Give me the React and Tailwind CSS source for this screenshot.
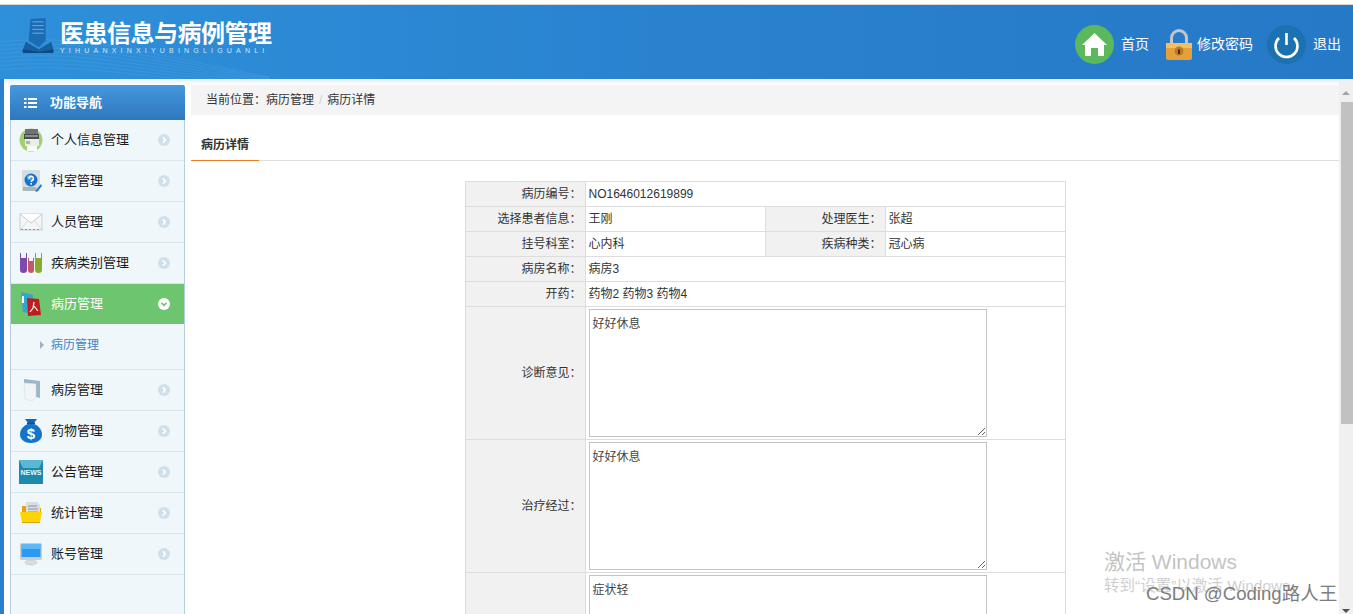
import React from "react";

const Arrow = ({ open }) => (
  <svg width="12" height="12" viewBox="0 0 12 12" className="shrink-0">
    <circle cx="6" cy="6" r="6" fill={open ? "#ffffff" : "#cfe0ea"} />
    {open ? (
      <path d="M3.4 4.8 L6 7.4 L8.6 4.8" fill="none" stroke="#6dc56f" strokeWidth="1.6" />
    ) : (
      <path d="M4.8 3.4 L7.4 6 L4.8 8.6" fill="none" stroke="#ffffff" strokeWidth="1.6" />
    )}
  </svg>
);

const Printer = () => (
  <svg width="24" height="24" viewBox="0 0 24 24">
    <circle cx="12" cy="12" r="11.5" fill="#a4cf72" />
    <rect x="6" y="1" width="13" height="5" fill="#6e7276" />
    <rect x="5" y="6" width="15" height="5" fill="#4a4d50" />
    <rect x="6" y="7" width="13" height="2" fill="#8b8f92" />
    <rect x="6" y="11" width="14" height="7" fill="#e9efe6" />
    <rect x="7" y="13" width="4" height="3" fill="#a9b6ab" />
    <rect x="8" y="18" width="10" height="5" fill="#f8faf6" />
  </svg>
);
const Help = () => (
  <svg width="24" height="24" viewBox="0 0 24 24">
    <rect x="3" y="1" width="18" height="21" rx="1" fill="#d5dde0" />
    <rect x="4" y="18" width="13" height="4" fill="#a9b7bc" />
    <circle cx="12" cy="11" r="6.5" fill="#1a72c6" />
    <circle cx="10.5" cy="8.5" r="2.5" fill="#5fb0ee" />
    <path d="M10 9.5 a2.2 2.2 0 1 1 3.2 2 q-1 .5 -1 1.6" fill="none" stroke="#fff" strokeWidth="1.5" />
    <rect x="11.4" y="14" width="1.6" height="1.6" fill="#fff" />
    <path d="M16 22 L22 15 L23 17 L18 23 Z" fill="#2a7fc4" />
  </svg>
);
const Mail = () => (
  <svg width="24" height="24" viewBox="0 0 24 24">
    <rect x="1" y="4" width="22" height="16" fill="#f6f6f6" stroke="#c8cdd0" />
    <path d="M1 4 L12 13 L23 4" fill="#ffffff" stroke="#c6cacc" />
    <path d="M1 20 L9 10 M23 20 L15 10" stroke="#d9dcde" />
    <path d="M2 19.5 H22" stroke="#d77" strokeDasharray="2 2" />
  </svg>
);
const Tubes = () => (
  <svg width="24" height="24" viewBox="0 0 24 24">
    <path d="M1 2 H2 V7 H7 V2 H8 V19 a3.5 3 0 0 1 -7 0 Z" fill="#7d49ad" />
    <path d="M9 7 H10 V10 H14 V7 H15 V19 a3 3 0 0 1 -6 0 Z" fill="#c25a64" />
    <path d="M16 2 H17 V7 H22 V2 H23 V19 a3.5 3 0 0 1 -7 0 Z" fill="#8aa92f" />
  </svg>
);
const Pdf = () => (
  <svg width="24" height="24" viewBox="0 0 24 24">
    <path d="M2 0 L14 3 V22 L4 20 Z" fill="#35a3cf" />
    <rect x="3" y="4" width="2" height="7" fill="#ffffff" />
    <path d="M8 6 L20 7 L22 23 L9 24 Z" fill="#bf1d1d" />
    <path d="M15 10 L14 16 L11 20 M15 14 L19 19" fill="none" stroke="#ffffff" strokeWidth="1.2" />
  </svg>
);
const Folder = () => (
  <svg width="24" height="24" viewBox="0 0 24 24">
    <path d="M5 1 L21 3 V20 L17 19 V6 L5 5 Z" fill="#9db6c9" />
    <path d="M5 5 L17 6 V19 L13 23 L6 21 Z" fill="#f1f5f7" stroke="#ccd7de" strokeWidth=".5" />
  </svg>
);
const Bag = () => (
  <svg width="24" height="24" viewBox="0 0 24 24">
    <path d="M6 0 H18 L15 4 H9 Z" fill="#1367b8" />
    <rect x="8" y="3.6" width="8" height="1.6" fill="#0c4f94" />
    <path d="M9 5 H15 C20 7 23 11 23 15.5 C23 21 18 24 12 24 C6 24 1 21 1 15.5 C1 11 4 7 9 5 Z" fill="#1574c9" />
    <text x="12" y="20" textAnchor="middle" fontSize="15" fontWeight="700" fill="#fff" fontFamily="Liberation Sans">$</text>
  </svg>
);
const News = () => (
  <svg width="24" height="24" viewBox="0 0 24 24">
    <rect width="24" height="24" fill="#1d89af" />
    <path d="M0 0 H24 L20 8 H4 Z" fill="#59b8d3" />
    <text x="12" y="15" textAnchor="middle" fontSize="7" fontWeight="700" fill="#e6f7fb" fontFamily="Liberation Sans">NEWS</text>
  </svg>
);
const OpenFolder = () => (
  <svg width="24" height="24" viewBox="0 0 24 24">
    <path d="M3 5 H9 L10 7 H22 V14 H3 Z" fill="#e3a507" />
    <path d="M7 1 H18 L21 4 V14 H7 Z" fill="#d8dde0" />
    <path d="M9 5 H18 M9 8 H19 M9 11 H19" stroke="#8d9499" />
    <path d="M1 11 H23 L21 21 H3 Z" fill="#fdd400" />
    <path d="M3 21 H21 V22 H3 Z" fill="#d9a400" />
  </svg>
);
const Monitor = () => (
  <svg width="24" height="24" viewBox="0 0 24 24">
    <rect x="1" y="1" width="22" height="17" rx="1.5" fill="#c9cdd0" />
    <rect x="2.5" y="2" width="19" height="13" fill="#2a9af0" />
    <rect x="2.5" y="2" width="19" height="5" fill="#5cb8f7" />
    <ellipse cx="12" cy="20.5" rx="6" ry="2.5" fill="#d9dcde" stroke="#bcc0c3" strokeWidth=".5" />
  </svg>
);

const Nav = ({ icon, label, active }) => (
  <div
    className={`flex items-center pl-[8px] pr-[14px] ${
      active ? "h-[40px] bg-[#6dc56f] text-white" : "h-[41px] border-b border-[#d8e5ec] text-[#1a1a1a]"
    }`}
  >
    <span className="flex w-[24px] justify-center">{icon}</span>
    <span className="ml-[8px] flex-1 text-[13px]">{label}</span>
    <Arrow open={active} />
  </div>
);

const Label = ({ children }) => (
  <td className="border border-[#dddddd] bg-[#f1f1f1] pr-[4px] text-right align-middle">{children}</td>
);
const Value = ({ children, span }) => (
  <td colSpan={span} className="border border-[#dddddd] px-[2px] align-middle">{children}</td>
);
const Area = ({ value }) => (
  <textarea
    readOnly
    value={value}
    className="my-[2px] ml-px block h-[128px] w-[398px] resize border border-[#c4c4c4] bg-white px-[2px] py-[5px] text-[12px] text-[#444] outline-none"
  />
);

export default function App() {
  return (
    <div
      className="relative flex h-[614px] w-[1353px] flex-col overflow-hidden bg-white text-[12px] text-[#333]"
      style={{ fontFamily: '"Liberation Sans", "Noto Sans CJK SC", sans-serif' }}
    >
      <div className="h-[4px] bg-white" />
      <div className="h-px bg-[#d8d8d8]" />
      <header className="relative flex h-[74px] items-start justify-between overflow-hidden bg-gradient-to-r from-[#2e90da] via-[#2a82cf] to-[#2679c6]">
        <svg width="420" height="74" viewBox="0 0 420 74" className="absolute top-0 left-0 opacity-20">
          {[0, 4, 8, 12, 16, 20, 24, 28].map((o) => (
            <path key={o} d={`M-10 ${38 + o} C 80 ${26 + o}, 150 ${50 + o}, 270 ${72 + o * 0.2}`} fill="none" stroke="#9fd0f2" strokeWidth=".6" />
          ))}
        </svg>
        <div className="relative flex items-start pl-[22px]">
          <svg width="34" height="36" viewBox="0 0 36 38" className="mt-[13px]">
            <path d="M9 1 L25 0 L25 24 L18 31 L7 24 Z" fill="#1d6cb3" />
            <path d="M11 4 H23 M11 8 H23 M11 12 H23 M11 16 H23" stroke="#6cb1e2" />
            <path d="M0 36 L4 25 L18 33 L31 25 L34 36 Z" fill="#16609f" />
            <path d="M1 33 L18 36 L33 33 V37 H1 Z" fill="#0e4a82" />
          </svg>
          <div className="ml-[4px] mt-[15px]">
            <div className="text-[24px] leading-[24px] font-bold tracking-[-0.5px] text-white" style={{ fontFamily: '"Noto Sans CJK SC", serif' }}>
              医患信息与病例管理
            </div>
            <div className="mt-[2px] text-[7px] leading-[9px] tracking-[4.2px] text-[#cfe6f7]">YIHUANXINXIYUBINGLIGUANLI</div>
          </div>
        </div>
        <nav className="relative mt-[20px] flex items-center pr-[12px] text-[14px] text-white">
          <svg width="39" height="39" viewBox="0 0 39 39">
            <circle cx="19.5" cy="19.5" r="19.5" fill="#5cb85c" />
            <path d="M7 20 L19.5 8 L32 20 L29 20 V31 H23 V23 H16 V31 H10 V20 Z" fill="#ffffff" />
          </svg>
          <span className="ml-[7px]">首页</span>
          <svg width="28" height="32" viewBox="0 0 28 32" className="ml-[16px]">
            <path d="M6.5 16 V9 a7.5 7.5 0 0 1 15 0 V16" fill="none" stroke="#c3c6c8" strokeWidth="3" />
            <rect x="1" y="14" width="26" height="17" rx="2" fill="#e3a03c" />
            <rect x="1" y="14" width="26" height="5" fill="#f2c063" />
            <circle cx="14" cy="22" r="4.5" fill="#bd7a1f" />
            <rect x="13" y="20.5" width="2" height="4.5" fill="#3a2406" />
          </svg>
          <span className="ml-[4px]">修改密码</span>
          <svg width="39" height="39" viewBox="0 0 39 39" className="ml-[14px]">
            <circle cx="19.5" cy="19.5" r="19.5" fill="#1b72b0" />
            <path d="M12 13 a11 11 0 1 0 15 0" fill="none" stroke="#ffffff" strokeWidth="2.6" />
            <path d="M19.5 8 V20" stroke="#ffffff" strokeWidth="2.6" />
          </svg>
          <span className="ml-[7px]">退出</span>
        </nav>
      </header>

      <div className="flex min-h-0 flex-1 border-l-4 border-[#2a80cd]">
        <div className="flex min-w-0 flex-1 bg-gradient-to-b from-[#e4f0f8] to-white to-[6px] pt-[6px] pl-[6px]">
          <aside className="flex w-[175px] shrink-0 flex-col">
            <div className="flex h-[35px] items-center rounded-t-[2px] bg-gradient-to-b from-[#4698de] to-[#2e77bd] pl-[14px] text-[13px] font-bold text-white">
              <svg width="13" height="12" viewBox="0 0 13 12" fill="#ffffff">
                <rect x="0" y="1" width="2.5" height="2" /><rect x="4" y="1" width="9" height="2" />
                <rect x="0" y="5" width="2.5" height="2" /><rect x="4" y="5" width="9" height="2" />
                <rect x="0" y="9" width="2.5" height="2" /><rect x="4" y="9" width="9" height="2" />
              </svg>
              <span className="ml-[13px]">功能导航</span>
            </div>
            <div className="flex-1 border-x border-[#b6cfe0] bg-[#eff7fb]">
              <Nav icon={<Printer />} label="个人信息管理" />
              <Nav icon={<Help />} label="科室管理" />
              <Nav icon={<Mail />} label="人员管理" />
              <Nav icon={<Tubes />} label="疾病类别管理" />
              <Nav icon={<Pdf />} label="病历管理" active />
              <div className="flex h-[46px] items-center border-b border-[#d8e5ec] pl-[29px] pb-[3px] text-[#3f83c4]">
                <span className="h-0 w-0 border-y-[4px] border-l-[4px] border-y-transparent border-l-[#9db3c4]" />
                <span className="ml-[7px]">病历管理</span>
              </div>
              <Nav icon={<Folder />} label="病房管理" />
              <Nav icon={<Bag />} label="药物管理" />
              <Nav icon={<News />} label="公告管理" />
              <Nav icon={<OpenFolder />} label="统计管理" />
              <Nav icon={<Monitor />} label="账号管理" />
            </div>
          </aside>

          <main className="ml-[6px] flex min-w-0 flex-1 flex-col">
            <div className="flex h-[30px] shrink-0 items-center bg-[#f4f4f4] pl-[15px]">
              当前位置：病历管理<span className="mx-[5px] text-[#ccc]">/</span>病历详情
            </div>
            <div className="flex h-[46px] shrink-0 items-end border-b border-[#dddddd]">
              <div className="-mb-px flex h-[31px] w-[68px] items-center justify-center border-b border-[#e9801e] font-bold">病历详情</div>
            </div>
            <div className="flex justify-center pt-[20px] pl-[1px]">
              <table className="w-[599px] table-fixed border-collapse">
                <colgroup>
                  <col className="w-[120px]" /><col className="w-[180px]" /><col className="w-[120px]" /><col className="w-[179px]" />
                </colgroup>
                <tbody>
                  <tr className="h-[25px]"><Label>病历编号：</Label><Value span={3}>NO1646012619899</Value></tr>
                  <tr className="h-[25px]"><Label>选择患者信息：</Label><Value>王刚</Value><Label>处理医生：</Label><Value>张超</Value></tr>
                  <tr className="h-[25px]"><Label>挂号科室：</Label><Value>心内科</Value><Label>疾病种类：</Label><Value>冠心病</Value></tr>
                  <tr className="h-[25px]"><Label>病房名称：</Label><Value span={3}>病房3</Value></tr>
                  <tr className="h-[25px]"><Label>开药：</Label><Value span={3}>药物2 药物3 药物4</Value></tr>
                  <tr className="h-[133px]"><Label>诊断意见：</Label><Value span={3}><Area value="好好休息" /></Value></tr>
                  <tr className="h-[133px]"><Label>治疗经过：</Label><Value span={3}><Area value="好好休息" /></Value></tr>
                  <tr className="h-[133px]"><Label></Label><Value span={3}><Area value="症状轻" /></Value></tr>
                </tbody>
              </table>
            </div>
          </main>
        </div>

        <div className="flex w-[14px] shrink-0 flex-col items-center bg-[#f0f0f0]">
          <span className="mt-[12px] h-0 w-0 border-x-[4px] border-b-[4px] border-x-transparent border-b-[#a3a3a3]" />
          <div className="mt-[7px] h-[322px] w-[12px] self-end bg-[#c1c1c1]" />
          <span className="mt-auto mb-px h-0 w-0 border-x-[4px] border-t-[4px] border-x-transparent border-t-[#505050]" />
        </div>
      </div>

      <div className="absolute top-[549px] left-[1104px] text-[21px] leading-[26px] text-[#c4c4c4]">激活 Windows</div>
      <div className="absolute top-[576px] left-[1104px] text-[15.5px] leading-[20px] text-[#cfcfcf]">转到“设置”以激活 Windows。</div>
      <div className="absolute top-[581px] left-[1146px] text-[18.6px] leading-[26px] text-[#7d7d7d]">CSDN @Coding路人王</div>
    </div>
  );
}
